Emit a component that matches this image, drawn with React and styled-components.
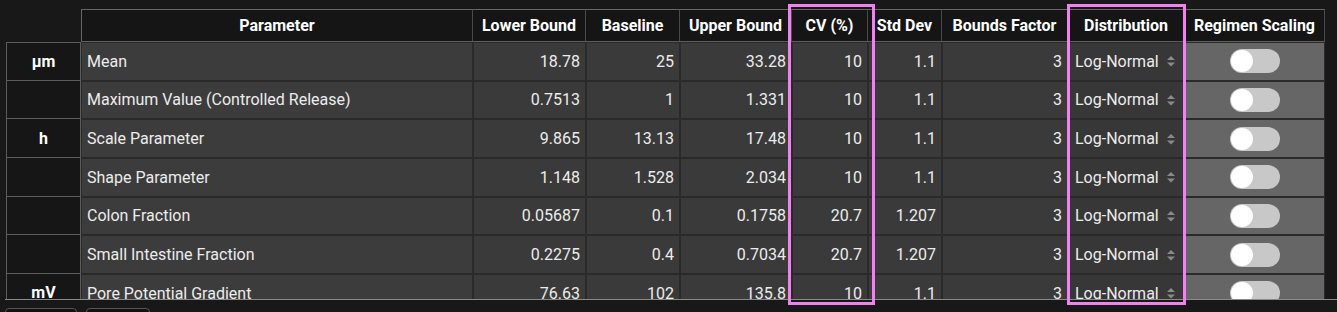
import React from "react";
import styled, { createGlobalStyle } from "styled-components";

const Global = createGlobalStyle`
  html, body { margin: 0; padding: 0; background: #181818; }
  body { font-family: Roboto, "Noto Sans", "Liberation Sans", sans-serif; color: #e6e6e6; }
  * { box-sizing: border-box; }
`;

const Page = styled.div`
  position: relative;
  width: 1337px;
  height: 312px;
  overflow: hidden;
`;

const Scroller = styled.div`
  height: 300px;
  margin-left: 5px;
  padding: 9px 0 0 1px;
  border-bottom: 1px solid #8a8a8a;
  overflow: hidden;
`;

const Grid = styled.div`
  display: grid;
  grid-template-columns: 75px 392px 113px 94px 112px 76px 74px 126px 117px 140px;
  grid-auto-rows: 38.67px;
  grid-template-rows: 33px;
`;

const HeadBlank = styled.div``;

const HeadCell = styled.div`
  display: flex;
  align-items: center;
  justify-content: center;
  background: #151515;
  border-top: 1px solid #666;
  border-bottom: 1px solid #5e5e5e;
  border-right: 1px solid #4a4a4a;
  border-left: ${(p) => (p.$first ? "1px solid #666" : "none")};
  color: #ffffff;
  font-weight: 700;
  font-size: 16px;
  white-space: nowrap;
`;

const UnitCell = styled.div`
  display: flex;
  align-items: center;
  justify-content: center;
  background: #161616;
  border: 1px solid #5c5c5c;
  border-top: none;
  color: #ffffff;
  font-weight: 700;
  font-size: 16px;
  &:nth-child(11) { border-top: 1px solid #5c5c5c; }
`;

const Cell = styled.div`
  display: flex;
  align-items: center;
  justify-content: ${(p) => (p.$left ? "flex-start" : "flex-end")};
  padding: 0 ${(p) => (p.$left ? "5px" : "5px")};
  background: ${(p) => p.$bg || "#3a3a3a"};
  border: 1px solid #2a2a2a;
  font-size: 16px;
  color: #ececec;
  white-space: nowrap;
  overflow: hidden;
`;

const SelectCell = styled(Cell)`
  justify-content: space-between;
  padding: 0 8px 0 6px;
  background: #373737;
`;

const ToggleCell = styled(Cell)`
  justify-content: center;
  padding: 0;
  background: #666666;
`;

const Track = styled.div`
  position: relative;
  width: 50px;
  height: 24px;
  border-radius: 12px;
  background: #c8c8c8;
`;

const Knob = styled.div`
  position: absolute;
  left: 1px;
  top: 1px;
  width: 22px;
  height: 22px;
  border-radius: 50%;
  background: #ffffff;
`;

const Footer = styled.div`
  display: flex;
  gap: 9px;
  padding: 8px 0 0 5px;
`;

const FootButton = styled.div`
  width: ${(p) => p.$w}px;
  height: 30px;
  border: 1px solid #555;
  border-radius: 4px;
  background: #111;
`;

const Highlight = styled.div`
  position: absolute;
  top: 4px;
  left: ${(p) => p.$x}px;
  width: ${(p) => p.$w}px;
  height: 301px;
  border: 3px solid #ee82ee;
  pointer-events: none;
`;

const Arrows = () => (
  <svg width="10" height="16" viewBox="0 0 10 16">
    <path d="M1 7 L5 3 L9 7 Z" fill="#8a8a8a" />
    <path d="M1 9.5 L5 13.5 L9 9.5 Z" fill="#8a8a8a" />
  </svg>
);

const headers = [
  "Parameter",
  "Lower Bound",
  "Baseline",
  "Upper Bound",
  "CV (%)",
  "Std Dev",
  "Bounds Factor",
  "Distribution",
  "Regimen Scaling",
];

const rows = [
  ["μm", "Mean", "18.78", "25", "33.28", "10", "1.1"],
  ["", "Maximum Value (Controlled Release)", "0.7513", "1", "1.331", "10", "1.1"],
  ["h", "Scale Parameter", "9.865", "13.13", "17.48", "10", "1.1"],
  ["", "Shape Parameter", "1.148", "1.528", "2.034", "10", "1.1"],
  ["", "Colon Fraction", "0.05687", "0.1", "0.1758", "20.7", "1.207"],
  ["", "Small Intestine Fraction", "0.2275", "0.4", "0.7034", "20.7", "1.207"],
  ["mV", "Pore Potential Gradient", "76.63", "102", "135.8", "10", "1.1"],
  ["", "Pore Radius", "1.2", "1.5", "2.1", "10", "1.1"],
];

export default function App() {
  return (
    <Page>
      <Global />
      <Scroller>
        <Grid>
          <HeadBlank />
          {headers.map((h, i) => (
            <HeadCell key={h} $first={i === 0}>
              {h}
            </HeadCell>
          ))}
          {rows.map((r, i) => (
            <React.Fragment key={i}>
              <UnitCell>{r[0]}</UnitCell>
              <Cell $left $bg="#3c3c3c">{r[1]}</Cell>
              <Cell>{r[2]}</Cell>
              <Cell>{r[3]}</Cell>
              <Cell>{r[4]}</Cell>
              <Cell>{r[5]}</Cell>
              <Cell>{r[6]}</Cell>
              <Cell>3</Cell>
              <SelectCell>
                <span>Log-Normal</span>
                <Arrows />
              </SelectCell>
              <ToggleCell>
                <Track>
                  <Knob />
                </Track>
              </ToggleCell>
            </React.Fragment>
          ))}
        </Grid>
      </Scroller>
      <Footer>
        <FootButton $w={72} />
        <FootButton $w={64} />
      </Footer>
      <Highlight $x={788} $w={87} />
      <Highlight $x={1067} $w={119} />
    </Page>
  );
}
